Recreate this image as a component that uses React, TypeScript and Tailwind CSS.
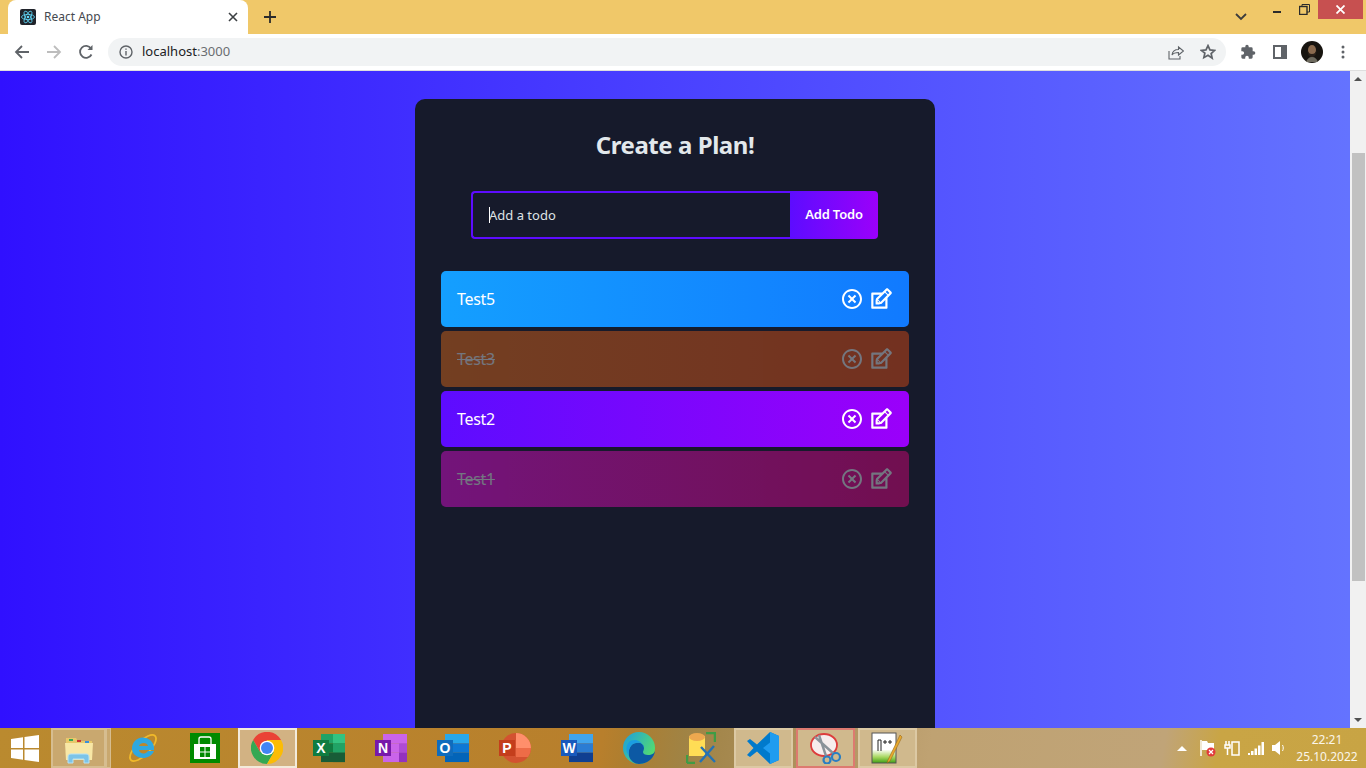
import { ReactNode } from "react";
import { RiCloseCircleLine } from "react-icons/ri";
import { TiEdit } from "react-icons/ti";

const todos = [
  { id: 5, text: "Test5", done: false, bg: "bg-[linear-gradient(90deg,#149fff,#117aff)]" },
  { id: 3, text: "Test3", done: true, bg: "bg-[linear-gradient(90deg,#ff7614,#ff5411)]" },
  { id: 2, text: "Test2", done: false, bg: "bg-[linear-gradient(90deg,#5d0cff,#9b00fa)]" },
  { id: 1, text: "Test1", done: true, bg: "bg-[linear-gradient(90deg,#ff0cf1,#fa0087)]" },
];

const ReactFavicon = () => (
  <svg width="16" height="16" viewBox="0 0 16 16">
    <rect width="16" height="16" rx="2" fill="#20232a" />
    <g fill="none" stroke="#61dafb" strokeWidth="0.8">
      <ellipse cx="8" cy="8" rx="6.5" ry="2.6" />
      <ellipse cx="8" cy="8" rx="6.5" ry="2.6" transform="rotate(60 8 8)" />
      <ellipse cx="8" cy="8" rx="6.5" ry="2.6" transform="rotate(120 8 8)" />
    </g>
    <circle cx="8" cy="8" r="1.3" fill="#61dafb" />
  </svg>
);

const TabBar = () => (
  <div className="h-[34px] bg-[#f0c869] flex items-end pl-2 shrink-0 relative">
    <div className="w-[240px] h-[34px] bg-white rounded-t-lg flex items-center pl-3 pr-[10px] mt-auto">
      <ReactFavicon />
      <span className="ml-2 text-xs text-[#45494f] flex-1">React App</span>
      <svg width="10" height="10" viewBox="0 0 10 10" stroke="#3c4043" strokeWidth="1.6">
        <path d="M1 1l8 8M9 1l-8 8" />
      </svg>
    </div>
    <svg className="ml-4 mb-[11px]" width="12" height="12" viewBox="0 0 12 12" stroke="#2b2b2b" strokeWidth="1.8">
      <path d="M6 0v12M0 6h12" />
    </svg>
    <div className="ml-auto flex items-start h-full">
      <svg className="mt-[13px] mr-[26px]" width="12" height="8" viewBox="0 0 12 8" fill="none" stroke="#3c3c3c" strokeWidth="1.8">
        <path d="M1 1l5 5 5-5" />
      </svg>
      <div className="w-[8px] h-[2px] bg-[#2b2b2b] mt-[11px] mr-[18px]" />
      <svg className="mt-[4px] mr-[8px]" width="11" height="11" viewBox="0 0 11 11" fill="none" stroke="#2b2b2b" strokeWidth="1">
        <rect x="0.5" y="2.5" width="7.5" height="8" strokeWidth="1.4" />
        <path d="M3 2.5V.5h7.5v7.5H8" />
      </svg>
      <div className="w-[45px] h-[19px] bg-[#c75050] flex items-center justify-center mr-[3px]">
        <svg width="9" height="9" viewBox="0 0 9 9" stroke="#fff" strokeWidth="1.8">
          <path d="M.5.5l8 8M8.500.5l-8 8" />
        </svg>
      </div>
    </div>
  </div>
);

const Toolbar = () => (
  <div className="h-[37px] bg-white border-b border-[#dedede] flex items-center shrink-0 pb-[1px]">
    <svg className="ml-[14px]" width="16" height="16" viewBox="0 0 16 16" fill="none" stroke="#5f6368" strokeWidth="1.8">
      <path d="M15 8H2M8 2L2 8l6 6" />
    </svg>
    <svg className="ml-[16px]" width="16" height="16" viewBox="0 0 16 16" fill="none" stroke="#bdbdbd" strokeWidth="1.8">
      <path d="M1 8h13M8 2l6 6-6 6" />
    </svg>
    <svg className="ml-[16px]" width="16" height="16" viewBox="0 0 16 16" fill="none" stroke="#5f6368" strokeWidth="1.8">
      <path d="M13.500 10.500A6 6 0 1 1 13 4.500" />
      <path d="M14.500 1v5h-5z" fill="#5f6368" stroke="none" />
    </svg>
    <div className="ml-[14px] w-[1118px] h-[28px] rounded-full bg-[#f1f3f4] flex items-center pl-[11px]">
      <svg width="14" height="14" viewBox="0 0 14 14" fill="none" stroke="#5f6368" strokeWidth="1.4">
        <circle cx="7" cy="7" r="6" />
        <path d="M7 6v4.500M7 3.500v1.300" />
      </svg>
      <span className="ml-[9px] text-[13px] text-[#202124]">
        localhost<span className="text-[#6a6d71]">:3000</span>
      </span>
      <svg className="ml-auto" width="16" height="16" viewBox="0 0 16 16" fill="none" stroke="#5f6368" strokeWidth="1.1">
        <path d="M1 7v8h11v-3M4 11c.5-3.500 3-5.500 6.500-5.500V3L15.500 7 10.500 11V8.500C8 8.500 5.500 9 4 11z" />
      </svg>
      <svg className="ml-[16px] mr-[10px]" width="16" height="16" viewBox="0 0 24 24" fill="none" stroke="#5f6368" strokeWidth="2.600">
        <path d="M12 2.500l2.900 6.400 7 .7-5.200 4.700 1.500 6.900L12 17l-6.200 3.500 1.500-6.900L2 9.600l7-.7z" />
      </svg>
    </div>
    <svg className="ml-[14px]" width="16" height="16" viewBox="0 0 24 24" fill="#5f6368">
      <path d="M20.500 11H19V7a2 2 0 0 0-2-2h-4V3.500a2.500 2.500 0 0 0-5 0V5H4a2 2 0 0 0-2 2v3.800h1.500a2.700 2.700 0 0 1 0 5.400H2V20a2 2 0 0 0 2 2h3.800v-1.500a2.700 2.700 0 0 1 5.400 0V22H17a2 2 0 0 0 2-2v-4h1.500a2.500 2.500 0 0 0 0-5z" />
    </svg>
    <div className="ml-[17px] w-[14px] h-[14px] border-2 border-r-[6px] border-[#5f6368] bg-white" />
    <svg className="ml-[14px]" width="22" height="22" viewBox="0 0 22 22">
      <circle cx="11" cy="11" r="11" fill="#17140f" />
      <ellipse cx="11" cy="9" rx="4" ry="5" fill="#8a6a4e" />
      <path d="M6.500 9c0 5 2 7 4.500 7s4.500-2 4.500-7c-1 3-2 4-4.500 4s-3.500-1-4.500-4z" fill="#2a2018" />
      <path d="M5 21c1-3 3-5 6-5s5 2 6 5z" fill="#6d6a5e" />
    </svg>
    <svg className="ml-[18px]" width="4" height="14" viewBox="0 0 4 14" fill="#5f6368">
      <circle cx="2" cy="2" r="1.500" />
      <circle cx="2" cy="7" r="1.500" />
      <circle cx="2" cy="12" r="1.500" />
    </svg>
  </div>
);

const Scrollbar = () => (
  <div className="w-4 shrink-0 bg-[#f1f1f1] flex flex-col items-center">
    <div className="mt-[6px] w-0 h-0 border-x-[4px] border-x-transparent border-b-[4px] border-b-[#505050]" />
    <div className="mt-[72px] w-[13px] h-[428px] bg-[#c1c1c1]" />
    <div className="mt-auto mb-[6px] w-0 h-0 border-x-[4px] border-x-transparent border-t-[4px] border-t-[#505050]" />
  </div>
);

const TodoApp = () => (
  <div className="w-[520px] mx-auto mt-7 rounded-t-[10px] bg-[#161a2b] h-[700px] flex flex-col items-center pt-[27px] pb-[31px]">
    <h1 className="text-2xl leading-[38px] font-bold text-[#e2e8ec] tracking-[-0.45px]">Create a Plan!</h1>
    <form className="mt-[27px] flex w-[407px] h-12 self-start ml-[56px]">
      <div className="relative flex-1">
        <input
          placeholder="Add a todo"
          className="w-full h-full bg-transparent border-2 border-r-0 border-[#5d0cff] rounded-l outline-none pl-4 pb-[1px] text-[13px] text-white placeholder:text-[#dfe3e6]"
        />
        <span className="absolute left-[18px] top-4 w-px h-4 bg-white" />
      </div>
      <button
        type="button"
        className="w-[88px] rounded-r bg-[linear-gradient(90deg,#5d0cff,#9b00fa)] text-[13px] font-semibold tracking-[-0.2px] text-white"
      >
        Add Todo
      </button>
    </form>
    <div className="mt-8 w-[468px] flex flex-col gap-1">
      {todos.map((t) => (
        <div
          key={t.id}
          className={`h-14 rounded-[5px] flex items-center justify-between pl-4 pr-[15px] text-white ${t.bg} ${
            t.done ? "opacity-40" : ""
          }`}
        >
          <span className={`tracking-[-0.3px] ${t.done ? "line-through" : ""}`}>{t.text}</span>
          <div className="flex items-center gap-1 text-2xl">
            <RiCloseCircleLine />
            <TiEdit className="text-[26px]" />
          </div>
        </div>
      ))}
    </div>
  </div>
);

const WindowsLogo = () => (
  <svg width="28" height="27" viewBox="0 0 28 27" fill="#fff">
    <path d="M0 4l12-1.700V13H0zM13.500 2L28 0v13H13.500zM0 14.500h12v10.200L0 23zM13.500 14.500H28V27l-14.500-2z" />
  </svg>
);

const ExplorerIcon = () => (
  <svg width="32" height="32" viewBox="0 0 32 32">
    <path d="M3 6h10l2 3h14v18H3z" fill="#e8c96a" />
    <path d="M2 11h28l-1 17H3z" fill="#f8e7a6" />
    <rect x="6" y="7" width="4" height="2" fill="#3aa655" />
    <rect x="14" y="8" width="4" height="2" fill="#c33" />
    <rect x="22" y="9" width="4" height="2" fill="#3b8fd9" />
    <path d="M5 31v-6c0-2 1-3 3-3h15c2 0 3 1 3 3v6h-5v-4H10v4z" fill="#7cc4e8" stroke="#b8e2f4" />
  </svg>
);

const IEIcon = () => (
  <svg width="32" height="32" viewBox="0 0 32 32">
    <ellipse cx="16" cy="16" rx="17" ry="7" transform="rotate(-45 16 16)" fill="none" stroke="#f0b92a" strokeWidth="1.800" />
    <path d="M5 17a11 11 0 0 1 22-1v2H12c.5 4 6 5 9 1h6c-3 8-14 9-19 4-2-1.700-3-3.500-3-6zm7-3h9c-.5-4-8-4-9 0z" fill="#2fa8e0" />
  </svg>
);

const StoreIcon = () => (
  <svg width="30" height="30" viewBox="0 0 30 30">
    <rect width="30" height="30" fill="#008a00" />
    <path d="M4 11h22v15H4z" fill="#fff" />
    <path d="M9 11V6c0-1 1-2 2-2h8c1 0 2 1 2 2v5" fill="none" stroke="#fff" strokeWidth="1.300" />
    <path d="M10 14h4.500v4.500H10zM15.500 14H20v4.500h-4.500zM10 19.500h4.500V24H10zM15.500 19.500H20V24h-4.500z" fill="#008a00" />
  </svg>
);

const ChromeIcon = () => (
  <svg width="32" height="32" viewBox="0 0 48 48">
    <path d="M24 24l-10.400 6L3.200 12A24 24 0 0 1 45 12H24z" fill="#ea4335" />
    <path d="M24 24l10.400 6L24 48A24 24 0 0 1 3.200 12l10.400 18z" fill="#34a853" />
    <path d="M24 24V12h21a24 24 0 0 1-21 36l10.400-18z" fill="#fbbc05" />
    <circle cx="24" cy="24" r="11" fill="#fff" />
    <circle cx="24" cy="24" r="9" fill="#4285f4" />
  </svg>
);

// office tile: 3 rows on the body, optional lighter column on the right
const OfficeIcon = ({
  letter,
  badge,
  cells,
  side,
  sideX = 20,
}: {
  letter: string;
  badge: string;
  cells: string[];
  side?: string[];
  sideX?: number;
}) => (
  <svg width="32" height="32" viewBox="0 0 32 32">
    {cells.map((c, i) => (
      <rect key={i} x="8" y={2 + i * 9.33} width="24" height="9.4" fill={c} />
    ))}
    {side?.map((c, i) => (
      <rect key={i} x={sideX} y={2 + i * 9.33} width={32 - sideX} height="9.4" fill={c} />
    ))}
    <rect x="0" y="8" width="16" height="16" fill={badge} />
    <text x="8" y="21" textAnchor="middle" fontSize="14" fontWeight="700" fill="#fff" fontFamily="'Liberation Sans', sans-serif">
      {letter}
    </text>
  </svg>
);

const PowerPointIcon = () => (
  <svg width="32" height="32" viewBox="0 0 32 32">
    <circle cx="17" cy="16" r="15" fill="#d35230" />
    <path d="M17 1a15 15 0 0 1 15 15H17z" fill="#ff8f6b" />
    <path d="M17 16h15a15 15 0 0 1-3 9H17z" fill="#ed6c47" />
    <rect x="0" y="8" width="16" height="16" fill="#c43e1c" />
    <text x="8" y="21" textAnchor="middle" fontSize="14" fontWeight="700" fill="#fff" fontFamily="'Liberation Sans', sans-serif">
      P
    </text>
  </svg>
);

const EdgeIcon = () => (
  <svg width="32" height="32" viewBox="0 0 32 32">
    <defs>
      <linearGradient id="edgeTop" x1="0" y1="0" x2="1" y2="0.600">
        <stop offset="0" stopColor="#1b9de2" />
        <stop offset="1" stopColor="#54dc6e" />
      </linearGradient>
    </defs>
    <circle cx="16" cy="16" r="16" fill="url(#edgeTop)" />
    <path d="M32 18c0 3-3 5-7 5-3 0-5-1-5-3 0-1 1-2 1-4 0-4-4-6-8-5C7 12 5 18 6 24c1 4 5 8 10 8 8 0 16-6 16-14z" fill="#0c59a4" />
    <path d="M21 16c0-4-4-6-8-5-6 1-8 7-7 13C3 20 2 15 6 10c3-3 12-4 15 6z" fill="#1b9de2" />
  </svg>
);

const DbToolsIcon = () => (
  <svg width="30" height="32" viewBox="0 0 30 32">
    <path d="M20 1h9v9M1 31v-8M1 31h8" fill="none" stroke="#3f9c45" strokeWidth="2.500" />
    <rect x="3" y="4" width="16" height="20" fill="#ffdd55" />
    <ellipse cx="11" cy="5" rx="8" ry="4" fill="#eda84f" />
    <path d="M15 15l14 15M28 14l-14 16" stroke="#2472b5" strokeWidth="2.400" />
  </svg>
);

const VSCodeIcon = () => (
  <svg width="32" height="32" viewBox="0 0 32 32">
    <path d="M23 0l9 4v24l-9 4-13-12.500L3 25l-3-2 6.500-7L0 9l3-2 7 5.500z" fill="#007acc" />
    <path d="M23 0l9 4v24l-9 4V21.500L16 16l7-5.500z" fill="#1f9cf0" />
  </svg>
);

const SnipIcon = () => (
  <svg width="32" height="32" viewBox="0 0 32 32">
    <ellipse cx="15" cy="13" rx="13" ry="11" fill="#f6eded" stroke="#dd3c3c" strokeWidth="1.800" />
    <path d="M6 5l19 17M10 3l7 21" stroke="#8a9299" strokeWidth="2.400" />
    <circle cx="27" cy="25" r="4" fill="none" stroke="#2a7ec2" strokeWidth="2.200" />
    <circle cx="18" cy="28" r="3.500" fill="none" stroke="#2a7ec2" strokeWidth="2.200" />
  </svg>
);

const NotepadIcon = () => (
  <svg width="32" height="32" viewBox="0 0 32 32">
    <defs>
      <linearGradient id="npGreen" x1="0" y1="0" x2="0" y2="1">
        <stop offset="0" stopColor="#fff" />
        <stop offset="0.55" stopColor="#fff" />
        <stop offset="0.8" stopColor="#a8d860" />
        <stop offset="1" stopColor="#3f9f14" />
      </linearGradient>
    </defs>
    <rect x="1" y="1" width="24" height="30" fill="url(#npGreen)" stroke="#555" />
    <path d="M7 19V8h3v11" fill="none" stroke="#222" />
    <path d="M12 10h4M14 8v4M17 10h4M19 8v4" stroke="#222" />
    <path d="M29 3l-12 25-1 3 3-2L31 5z" fill="#e8a92e" stroke="#8a5a10" strokeWidth="0.500" />
  </svg>
);

const TaskButton = ({ children, style }: { children: ReactNode; style?: "open" | "active" | "snip" }) => {
  let frame = "";
  if (style === "open") frame = "bg-[#d0b98d] border-2 border-[#dcc9a4]";
  if (style === "active") frame = "bg-[#d2b283] border-2 border-[#f3ebdc]";
  if (style === "snip") frame = "bg-[#d0b98d] border-2 border-[#dd7a70]";
  return (
    <div className="w-[62px] h-10 flex items-center justify-center">
      <div className={`w-[59px] h-10 flex items-center justify-center ${frame}`}>{children}</div>
    </div>
  );
};

const Tray = () => (
  <div className="ml-auto flex items-center h-10 text-white">
    <div className="w-0 h-0 border-x-[5px] border-x-transparent border-b-[5px] border-b-white" />
    <svg className="ml-[13px]" width="16" height="18" viewBox="0 0 16 18">
      <path d="M1 1v16" stroke="#fff" strokeWidth="1.500" />
      <path d="M2 2h5l1 2h6v7H2z" fill="#fff" />
      <circle cx="11" cy="13" r="4.500" fill="#e23b3b" />
      <path d="M9 11l4 4M13 11l-4 4" stroke="#fff" strokeWidth="1.200" />
    </svg>
    <svg className="ml-[8px]" width="16" height="16" viewBox="0 0 16 16" fill="none" stroke="#fff" strokeWidth="1.500">
      <path d="M2 1v4M5 1v4M1 5h5v3H1zM3.500 8v7" />
      <rect x="8" y="2" width="7" height="13" />
    </svg>
    <svg className="ml-[8px]" width="16" height="14" viewBox="0 0 16 14" fill="#fff">
      <path d="M0 12h2v2H0zM3 10h2.500v4H3zM6.500 7.500H9V14H6.500zM10 4.500h2.500V14H10zM13.500 1H16v13h-2.500z" />
    </svg>
    <svg className="ml-[8px]" width="14" height="16" viewBox="0 0 14 16">
      <path d="M0 5h3l5-4v14l-5-4H0z" fill="#fff" />
      <path d="M10.500 5c1 2 1 4 0 6" fill="none" stroke="#fff" />
    </svg>
    <div className="w-[74px] mr-[2px] ml-[4px] text-center text-xs leading-[17px] text-[#fbf6ea]">
      <div>22:21</div>
      <div>25.10.2022</div>
    </div>
  </div>
);

const Taskbar = () => (
  <div className="h-10 shrink-0 flex items-center bg-[linear-gradient(100deg,#ba8a2f_0%,#b87f2c_44%,#ad7e30_46%,#a08344_50%,#a98c56_56%,#bfa272_68%,#c0a478_85%,#c9a545_89%,#c8a444_100%)]">
    <div className="w-[51px] pl-[11px] flex items-center">
      <WindowsLogo />
    </div>
    <div className="w-[55px] h-10 bg-[#c9a86f] border-2 border-[#d6bd90] flex items-center justify-center">
      <ExplorerIcon />
    </div>
    <div className="w-[5px] h-10 mr-[1px] bg-[#c9a86f] border border-[#d6bd90]" />
    <TaskButton>
      <IEIcon />
    </TaskButton>
    <TaskButton>
      <StoreIcon />
    </TaskButton>
    <TaskButton style="active">
      <ChromeIcon />
    </TaskButton>
    <TaskButton>
      <OfficeIcon
        letter="X"
        badge="#107c41"
        cells={["#21a366", "#107c41", "#185c37"]}
        side={["#33c481", "#21a366", "#185c37"]}
      />
    </TaskButton>
    <TaskButton>
      <OfficeIcon
        letter="N"
        badge="#7719aa"
        cells={["#ca64ea", "#ca64ea", "#ca64ea"]}
        side={["#ca64ea", "#ae4bd5", "#9332bf"]}
        sideX={24}
      />
    </TaskButton>
    <TaskButton>
      <OfficeIcon letter="O" badge="#0f6cbd" cells={["#28a8ea", "#0f78d4", "#0364b8"]} />
    </TaskButton>
    <TaskButton>
      <PowerPointIcon />
    </TaskButton>
    <TaskButton>
      <OfficeIcon letter="W" badge="#185abd" cells={["#41a5ee", "#2b7cd3", "#103f91"]} />
    </TaskButton>
    <TaskButton>
      <EdgeIcon />
    </TaskButton>
    <TaskButton>
      <DbToolsIcon />
    </TaskButton>
    <TaskButton style="open">
      <VSCodeIcon />
    </TaskButton>
    <TaskButton style="snip">
      <SnipIcon />
    </TaskButton>
    <TaskButton style="open">
      <NotepadIcon />
    </TaskButton>
    <Tray />
  </div>
);

const App = () => {
  return (
    <div className="h-screen flex flex-col overflow-hidden font-['Noto_Sans',sans-serif]">
      <TabBar />
      <Toolbar />
      <div className="flex-1 min-h-0 flex overflow-hidden">
        <div className="flex-1 min-w-0 bg-[linear-gradient(90deg,#3010ff,#6473ff)]">
          <TodoApp />
        </div>
        <Scrollbar />
      </div>
      <Taskbar />
    </div>
  );
};

export default App;
